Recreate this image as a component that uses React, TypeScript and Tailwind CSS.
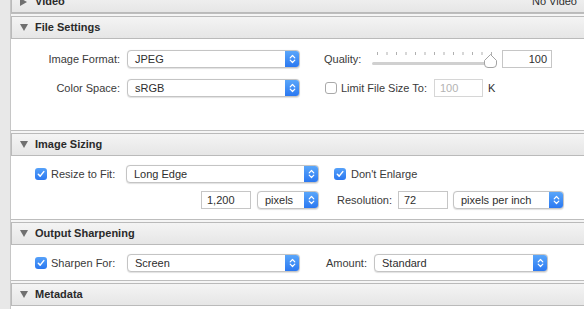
import React from "react";

const Chevrons = () => (
    <svg width="7" height="10" viewBox="0 0 7 10" fill="none" stroke="white" strokeWidth="1.2" strokeLinecap="round" strokeLinejoin="round">
        <path d="M1.2 3.8 L3.5 1.5 L5.8 3.8" />
        <path d="M1.2 6.2 L3.5 8.5 L5.8 6.2" />
    </svg>
);

const Select = ({ value, className }: { value: string; className: string }) => (
    <div className={`h-[18px] flex rounded-[4px] border border-[#c4c4c4] bg-white overflow-hidden shadow-[0_0.5px_1px_rgba(0,0,0,0.12)] ${className}`}>
        <span className="flex-1 pl-[7px] leading-[16px] text-[#2e2e2e] truncate">{value}</span>
        <span className="w-[14px] flex items-center justify-center bg-linear-to-b from-[#5aa6fa] to-[#2b78f1]">
            <Chevrons />
        </span>
    </div>
);

const TextInput = ({ value, className, disabled = false, right = false }: { value: string; className: string; disabled?: boolean; right?: boolean }) => (
    <div className={`h-[18px] border bg-white leading-[16px] ${disabled ? "border-[#d6d6d6] text-[#b3b3b3] pl-[5px]" : "border-[#c6c6c6] text-[#2e2e2e]"} ${right ? "text-right pr-[4px]" : "pl-[5px]"} ${className}`}>
        {value}
    </div>
);

const Check = ({ checked, className = "" }: { checked: boolean; className?: string }) =>
    checked ? (
        <span className={`w-[12px] h-[12px] rounded-[3px] flex items-center justify-center bg-linear-to-b from-[#56a1f9] to-[#2a77f0] ${className}`}>
            <svg width="8" height="8" viewBox="0 0 8 8" fill="none" stroke="white" strokeWidth="1.5" strokeLinecap="round" strokeLinejoin="round">
                <path d="M1.3 4.2 L3.2 6.1 L6.8 1.6" />
            </svg>
        </span>
    ) : (
        <span className={`w-[12px] h-[12px] rounded-[3px] border border-[#a9a9a9] bg-white ${className}`} />
    );

const Slider = () => {
    const ticks = Array.from({ length: 13 }, (_, i) => 5 + i * 9.5);
    return (
        <svg width="126" height="18" viewBox="0 0 126 18">
            {ticks.map((x, i) => (
                <rect key={i} x={x} y="2" width="1" height="3" fill="#b0b0b0" />
            ))}
            <rect x="0" y="12" width="120" height="3" rx="1.5" fill="#d0d0d0" />
            <path d="M118.5 4.5 L124.5 10.5 V14 Q124.5 17.5 121 17.5 H116 Q112.5 17.5 112.5 14 V10.5 Z" fill="white" stroke="#a3a3a3" strokeWidth="1" />
        </svg>
    );
};

const Separator = () => <div className="h-[3px] border-t border-[#bdbdbd] bg-[#f5f5f5]" />;

const Header = ({ title, open = true, right, className = "" }: { title: string; open?: boolean; right?: string; className?: string }) => (
    <div className={`h-[23px] flex items-center border-t border-b border-l border-[#bababa] bg-linear-to-b from-[#f4f4f4] to-[#e6e6e6] pl-[8px] pr-[7px] ${className}`}>
        {open ? (
            <svg width="8" height="7" viewBox="0 0 8 7"><polygon points="0,0 8,0 4,7" fill="#707070" /></svg>
        ) : (
            <svg width="8" height="8" viewBox="0 0 8 8"><polygon points="0,0 7,4 0,8" fill="#707070" /></svg>
        )}
        <span className="ml-[7px] font-bold text-[#2a2a2a]">{title}</span>
        {right && <span className="ml-auto text-[#2e2e2e]">{right}</span>}
    </div>
);

const App = () => {
    return (
        <main className="w-[584px] h-[309px] overflow-hidden flex bg-white text-[11px] text-[#3a3a3a] font-['Liberation_Sans',Arial,sans-serif]">
            <div className="w-[11px] shrink-0 bg-[#e8e8e8] border-r border-[#c6c6c6]" />
            <div className="flex-1 flex flex-col">
                <Header title="Video" open={false} right="No Video" className="-mt-[10px]" />

                <Separator />
                <Header title="File Settings" />
                <section className="h-[91px] pt-[11px] flex flex-col gap-[11px]">
                    <div className="flex items-center h-[18px]">
                        <span className="w-[109px] text-right">Image Format:</span>
                        <Select value="JPEG" className="ml-[7px] w-[173px]" />
                        <span className="ml-[24px] w-[48px]">Quality:</span>
                        <Slider />
                        <TextInput value="100" right className="ml-[4px] w-[50px]" />
                    </div>
                    <div className="flex items-center h-[18px]">
                        <span className="w-[109px] text-right">Color Space:</span>
                        <Select value="sRGB" className="ml-[7px] w-[173px]" />
                        <Check checked={false} className="ml-[25px]" />
                        <span className="ml-[4px] w-[93px]">Limit File Size To:</span>
                        <TextInput value="100" disabled className="w-[49px]" />
                        <span className="ml-[5px] text-[#2e2e2e]">K</span>
                    </div>
                </section>

                <Separator />
                <Header title="Image Sizing" />
                <section className="h-[63px] pt-[9px] flex flex-col gap-[8px]">
                    <div className="flex items-center h-[18px]">
                        <Check checked className="ml-[24px]" />
                        <span className="ml-[4px] w-[75px]">Resize to Fit:</span>
                        <Select value="Long Edge" className="w-[193px]" />
                        <Check checked className="ml-[15px]" />
                        <span className="ml-[5px]">Don't Enlarge</span>
                    </div>
                    <div className="flex items-center h-[18px]">
                        <TextInput value="1,200" className="ml-[190px] w-[50px]" />
                        <Select value="pixels" className="ml-[6px] w-[62px]" />
                        <span className="ml-[18px] w-[61px]">Resolution:</span>
                        <TextInput value="72" className="w-[50px]" />
                        <Select value="pixels per inch" className="ml-[5px] w-[111px]" />
                    </div>
                </section>

                <Separator />
                <Header title="Output Sharpening" />
                <section className="h-[35px] pt-[9px]">
                    <div className="flex items-center h-[18px]">
                        <Check checked className="ml-[24px]" />
                        <span className="ml-[4px] w-[76px]">Sharpen For:</span>
                        <Select value="Screen" className="w-[173px]" />
                        <span className="ml-[26px] w-[48px]">Amount:</span>
                        <Select value="Standard" className="w-[174px]" />
                    </div>
                </section>

                <Separator />
                <Header title="Metadata" />
            </div>
        </main>
    );
};

export default App;
